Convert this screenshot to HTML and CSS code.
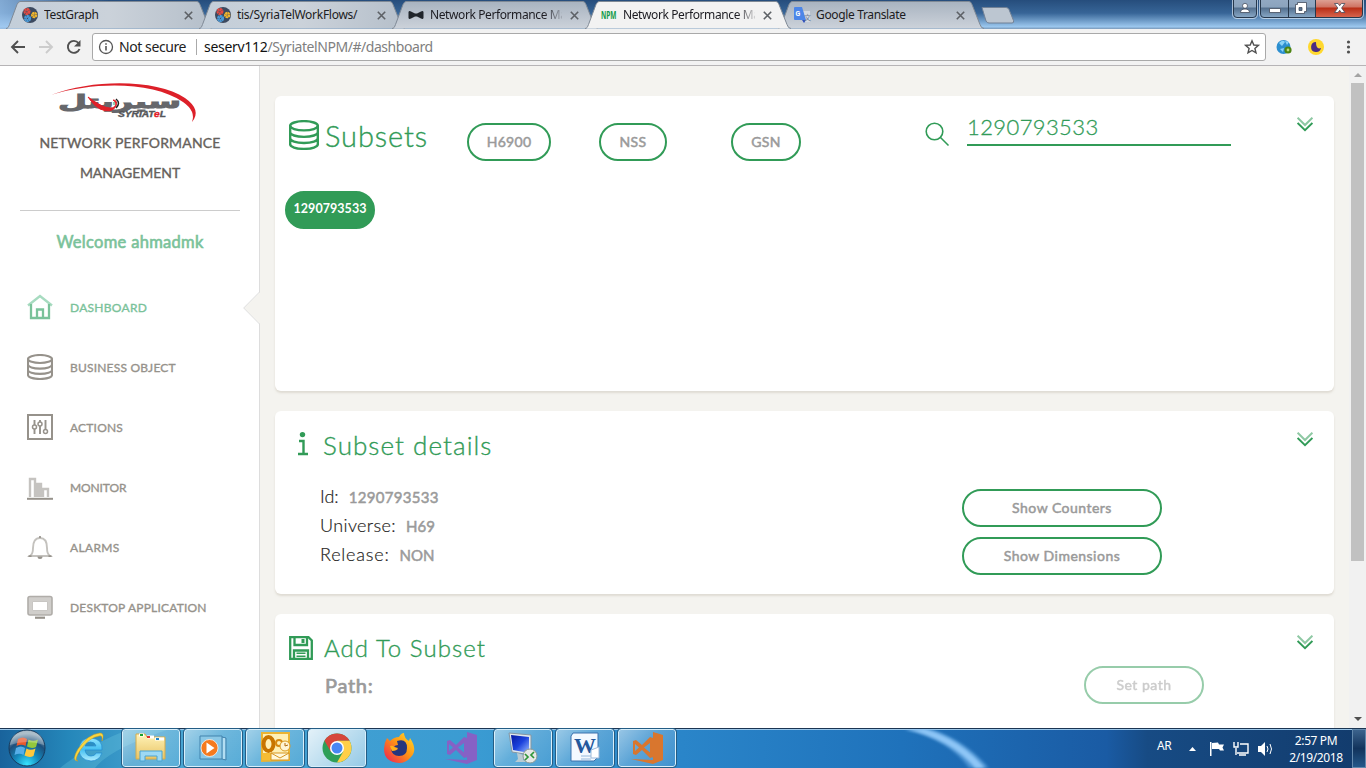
FILE: index.html
```html
<!DOCTYPE html>
<html lang="en">
<head>
<meta charset="utf-8">
<title>Network Performance Management</title>
<link rel="stylesheet" href="styles.css">
</head>
<body>
<svg class="defs" width="0" height="0">
  <defs>
    <linearGradient id="tabfill" x2="1" y2="0"><stop stop-color="#c3ced9"/><stop offset=".5" stop-color="#cbd2da"/><stop offset="1" stop-color="#b5bfca"/></linearGradient>
    <linearGradient id="tabfill2" x2="0" y2="1"><stop stop-color="#a8b3c0"/><stop offset="1" stop-color="#ccd2da"/></linearGradient>
    <radialGradient id="orb" cy=".95" r=".85"><stop stop-color="#37e4ff"/><stop offset=".4" stop-color="#1489bd"/><stop offset=".75" stop-color="#1c4f7c"/><stop offset="1" stop-color="#91a9b9"/></radialGradient>
    <linearGradient id="ie" x2="0" y2="1"><stop stop-color="#90e5ff"/><stop offset=".5" stop-color="#45bff1"/><stop offset="1" stop-color="#b0edff"/></linearGradient>
    <linearGradient id="folder" x2="0" y2="1"><stop stop-color="#fff3b8"/><stop offset="1" stop-color="#e9c465"/></linearGradient>
    <linearGradient id="screen" x2="1" y2="1"><stop stop-color="#0618a0"/><stop offset=".5" stop-color="#1b42dd"/><stop offset="1" stop-color="#98bcff"/></linearGradient>
    <linearGradient id="fox" x1="1" y1="0" x2="0" y2="1"><stop stop-color="#ffe12d"/><stop offset=".45" stop-color="#ff9514"/><stop offset="1" stop-color="#ed1859"/></linearGradient>
    <symbol id="gears" viewBox="0 0 16 16"><circle cx="8" cy="8" r="8" fill="#3c4a60"/><circle cx="5" cy="4.500" r="2" fill="none" stroke="#e24b43" stroke-width="3" stroke-dasharray="1.800 .3"/><circle cx="12.200" cy="8" r="1.900" fill="none" stroke="#f3b72c" stroke-width="2.600" stroke-dasharray="1.800 .3"/><circle cx="5.500" cy="11.500" r="2.100" fill="none" stroke="#4a9bd9" stroke-width="3" stroke-dasharray="1.800 .3"/></symbol>
    <symbol id="x" viewBox="0 0 9 9"><path d="M.8.8l7.400 7.400M8.200.8L.8 8.200" stroke="#5d6166" stroke-width="1.600"/></symbol>
    <symbol id="tab" viewBox="0 0 206 29"><path d="M0 28.500c2 0 2.500-1.500 3.500-4L11 4.500Q12.500 1.500 14 1.500H191q2 0 3 3l8 20q1.200 4 4 4" stroke="#7f8995"/></symbol>
    <symbol id="db" viewBox="0 0 26 26"><g fill="none" stroke="currentColor" stroke-width="2.100"><ellipse cx="13" cy="5" rx="12" ry="4"/><path d="M1 5v16c0 2.300 5 4 12 4s12-1.700 12-4V5M1 10.600c0 2.200 5 4 12 4s12-1.800 12-4M1 15.900c0 2.200 5 4 12 4s12-1.800 12-4"/></g></symbol>
    <symbol id="chev" viewBox="0 0 16 15"><g fill="none" stroke="#319b57"><path d="M.6.700L8 8l7.400-7.300" stroke-width="2" opacity=".55"/><path d="M.6 6L8 13.200 15.400 6" stroke-width="1.900"/></g></symbol>
    <symbol id="vs" viewBox="0 0 32 32"><path fill="currentColor" fill-rule="evenodd" d="M22 0l10 3v25l-10 4L0 27l22 1V0zM2 9l3-1 6 5 8-8 3 1v19l-3 1-8-8-6 5-3-1zM4 12v7l4-3.500zM19 11l-6 4.500 6 5z"/></symbol>
  </defs>
</svg>

<header class="chrome">
  <div class="strip">
    <div class="tab"><svg class="shape a"><use href="#tab"/></svg><svg class="fav"><use href="#gears"/></svg><span class="label t1">TestGraph</span><svg class="close"><use href="#x"/></svg></div>
    <div class="tab"><svg class="shape a"><use href="#tab"/></svg><svg class="fav"><use href="#gears"/></svg><span class="label t2">tis/SyriaTelWorkFlows/</span><svg class="close"><use href="#x"/></svg></div>
    <div class="tab"><svg class="shape b"><use href="#tab"/></svg><svg class="fav" viewBox="0 0 16 16"><path fill="#20252b" d="M.5 5Q1 3.500 3 4.500l4 2h2l4-2q2-1 2.500.5v6q-.5 1.500-2.500.5l-4-2H7l-4 2Q1 12.500.500 11z"/></svg><span class="label fade">Network Performance Ma</span><svg class="close"><use href="#x"/></svg></div>
    <div class="tab active"><svg class="shape c"><use href="#tab"/></svg><svg class="fav" viewBox="0 0 16 16"><text x="0" y="11.800" textLength="15.500" lengthAdjust="spacingAndGlyphs" class="npm">NPM</text></svg><span class="label fade">Network Performance Ma</span><svg class="close"><use href="#x"/></svg></div>
    <div class="tab"><svg class="shape b"><use href="#tab"/></svg><svg class="fav" viewBox="0 0 16 16"><path fill="#d4dae2" d="M7 4h9v11H9z"/><path fill="#4c86e8" d="M1 0h7l4 13H1q-1 0-1-1V1q0-1 1-1z"/><path fill="#304ebf" d="M8 13h4l-2 3z"/><text x="1.500" y="8.500" class="gg">G</text><text x="10" y="12.500" class="wen">文</text></svg><span class="label t5">Google Translate</span><svg class="close"><use href="#x"/></svg></div>
    <svg class="newtab" viewBox="0 0 34 17"><path d="M1 .5h24q2 0 3 2l4.500 11q.8 2.500-1.500 2.500H8q-2 0-3-2z" fill="#bcc6d1" stroke="#718196"/></svg>
    <svg class="winbtns" viewBox="0 0 132 20">
      <defs><linearGradient id="wb" x2="0" y2="1"><stop stop-color="#92a9c3"/><stop offset=".44" stop-color="#8ba3bd"/><stop offset=".48" stop-color="#536f8e"/><stop offset="1" stop-color="#89a9c7"/></linearGradient><linearGradient id="wr" x2="0" y2="1"><stop stop-color="#dfa69a"/><stop offset=".44" stop-color="#cf7262"/><stop offset=".48" stop-color="#b82d16"/><stop offset="1" stop-color="#d96750"/></linearGradient></defs>
      <g stroke="#27384c"><path d="M1.500-1V14q0 3.500 3.500 3.500H21q3.500 0 3.500-3.500V-1z" fill="url(#wb)"/><path d="M28.500-1V14q0 3.500 3.500 3.500H127q3.500 0 3.500-3.500V-1z" fill="url(#wb)"/><path d="M83.500-1V17.500H127q3.500 0 3.500-3.500V-1z" fill="url(#wr)"/><path d="M56.500 0V17"/></g>
      <path d="M.5 0V14q0 4.500 4.500 4.500H21q4.500 0 4.500-4.500V0M27.500 0V14q0 4.500 4.500 4.500H127q4.500 0 4.500-4.500V0" fill="none" stroke="#dbe8f6" opacity=".7"/>
      <g fill="#fff" stroke="#424b5c" stroke-width=".8"><circle cx="13" cy="5.800" r="2.500"/><path d="M8.500 12.500q0-3.500 4.500-3.500t4.500 3.500zM37.500 8.500h11v4h-11z"/><path fill-rule="evenodd" d="M65.500 2.500h9v9h-2v2h-9v-9h2zM67 7.500v3h3v-3z"/><path d="M102.500 3.500h3.500l1.700 2.200 1.700-2.200h3.500l-3.300 4.500 3.300 4.500h-3.500l-1.700-2.200-1.700 2.200h-3.500l3.300-4.500z"/></g>
    </svg>
  </div>
  <div class="toolbar">
    <svg class="nav" viewBox="0 0 80 20"><g fill="none" stroke-width="1.900"><path d="M16 10H3.500M9 4l-6 6 6 6" stroke="#505050"/><path d="M30 10h12.500M37 4l6 6-6 6" stroke="#ccc"/><path d="M69.500 6A6 6 0 1 0 70.500 12" stroke="#505050"/></g><path d="M71.500 3v6.500H65z" fill="#505050"/></svg>
    <div class="omni">
      <svg class="info" viewBox="0 0 16 16"><circle cx="8" cy="8" r="6.500" fill="none" stroke="#555" stroke-width="1.300"/><path d="M8 7v4.500M8 4.300v1.500" stroke="#555" stroke-width="1.600"/></svg>
      <span class="secure">Not secure</span><i class="sep"></i><span class="url"><b>seserv112</b>/SyriatelNPM/#/dashboard</span>
      <svg class="star" viewBox="0 0 16 16"><path d="M8 1.800l1.800 4.200 4.600.4-3.500 3 1.100 4.500L8 11.500l-4 2.400 1.100-4.500-3.500-3 4.600-.4z" fill="none" stroke="#505050" stroke-width="1.400"/></svg>
    </div>
    <svg class="ext" viewBox="0 0 80 20"><circle cx="7.500" cy="10" r="7" fill="#2c8fd0"/><path d="M3 6q4-4 6-1L6 9zM9 4l4 1-2 3zM4 12l4-1-1 4z" fill="#8bd3f7"/><circle cx="12" cy="13" r="2.500" fill="#b9dc7b" stroke="#4d8411" stroke-width="2.200"/><circle cx="40" cy="10" r="8" fill="#ffd82e"/><path d="M40 5a5 5 0 1 0 5 6q-5 2-5-6z" fill="#4b2c82"/><g fill="#505050"><circle cx="72.500" cy="5" r="1.600"/><circle cx="72.500" cy="10" r="1.600"/><circle cx="72.500" cy="15" r="1.600"/></g></svg>
  </div>
</header>

<div class="app">
  <aside class="side">
    <svg class="logo" viewBox="0 0 146 40">
      <text x="7" y="25" textLength="123" lengthAdjust="spacingAndGlyphs" class="arabic">سيريتل</text>
      <path d="M0 12C45-5 107-3 134 15q17 12 7 24 4-11-9-20C103-1 45-2 0 12z" fill="#dd2029"/>
      <path d="M37 14q11 8 17 10 10 3 11-3-1-3-3-4 5 0 3 6-4 8-16 3Q43 23 37 14z" fill="#e12028" stroke="#e12028"/>
      <path d="M65 16q5 4 0 9" fill="none" stroke="#222" stroke-width="1.500"/><path d="M63 19v3" stroke="#28a263"/>
      <text x="67" y="34" textLength="48" lengthAdjust="spacingAndGlyphs" class="latin">SYRIAT<tspan class="red">e</tspan>L</text>
    </svg>
    <h1 class="brand"><span>NETWORK PERFORMANCE</span><span class="br2">MANAGEMENT</span></h1>
    <p class="welcome"><span>Welcome ahmadmk</span></p>
    <nav class="menu">
      <a class="item on"><svg viewBox="0 0 26 26"><path d="M1 11.500L13 2l12 9.500" fill="none" stroke="#a7dbc0" stroke-width="2.400"/><path d="M4 10v14h18V10M10 24v-8.500h6V24" fill="none" stroke="#7ac29a" stroke-width="2.300"/></svg><span class="m1">DASHBOARD</span></a>
      <a class="item"><svg><use href="#db"/></svg><span class="m2">BUSINESS OBJECT</span></a>
      <a class="item"><svg viewBox="0 0 26 26"><g fill="none" stroke="currentColor"><path d="M1 1h24v24H1z" stroke-width="2"/><path d="M7.500 6v5M7.500 15v5M13 6v2M13 12v8M18.500 6v9" stroke-width="1.900"/><circle cx="7.500" cy="13" r="2" stroke-width="1.500"/><circle cx="13" cy="10" r="2" stroke-width="1.500"/><circle cx="18.500" cy="17.500" r="2" stroke-width="1.500"/></g></svg><span class="m3">ACTIONS</span></a>
      <a class="item"><svg viewBox="0 0 26 26"><path d="M3 23V5h5v18M9 23V10h5v13M16 23v-8h5v8" fill="none" stroke="#c5c3c0" stroke-width="2.400"/><path d="M9.500 11h5v12h-5z" fill="#c5c3c0"/><path d="M0 24.800h26" stroke="#96928b" stroke-width="2"/></svg><span class="m4">MONITOR</span></a>
      <a class="item"><svg viewBox="0 0 26 26"><path d="M3 22q3-2 3-8 0-10 7-10t7 10q0 6 3 8z" fill="none" stroke="#c4c2be" stroke-width="1.900"/><path d="M1.500 22.200h3M21.500 22.200h3M13 2v2" stroke="#96928b" stroke-width="1.700"/><path d="M10.500 22.500h5q0 2.500-2.500 2.500t-2.500-2.500z" fill="#96928b"/></svg><span class="m5">ALARMS</span></a>
      <a class="item"><svg viewBox="0 0 26 26"><rect x="1" y="2.500" width="24" height="18.500" rx="2" fill="#d0cecb" stroke="#b0ada9" stroke-width="1.600"/><path d="M5.500 7.500h15v9h-15z" fill="#fff" stroke="#c8c6c3"/><path d="M8 23.700h10" stroke="#96928b" stroke-width="2.200"/></svg><span class="m6">DESKTOP APPLICATION</span></a>
    </nav>
    <svg class="notch" viewBox="0 0 17 32"><path d="M17 0L1 16l16 16z" fill="#f4f3ef"/><path d="M16.500 0L.700 16l15.800 16" fill="none" stroke="#ddd"/></svg>
  </aside>

  <main class="main">
    <section class="card c1">
      <div class="row">
        <svg class="dbi"><use href="#db"/></svg><h2 class="h-sub">Subsets</h2>
        <div class="filters"><div><button class="pill p1"><span>H6900</span></button></div><div><button class="pill p2"><span>NSS</span></button></div><div><button class="pill p3"><span>GSN</span></button></div></div>
        <svg class="search" viewBox="0 0 24 24"><circle cx="9.500" cy="9.500" r="8.300" fill="none" stroke="#319b57" stroke-width="1.600"/><path d="M15.500 15.500l8 8" stroke="#319b57" stroke-width="1.600"/></svg>
        <div class="query"><span>1290793533</span></div>
        <svg class="chev"><use href="#chev"/></svg>
      </div>
      <button class="pill solid"><span>1290793533</span></button>
    </section>
    <section class="card c2">
      <div class="row"><svg class="ii" viewBox="0 0 10 24"><circle cx="4.500" cy="2.600" r="2.700" fill="#319b57"/><path d="M1 9h4.500v13M0 22h10" fill="none" stroke="#319b57" stroke-width="2.400"/></svg><h2 class="h-det">Subset details</h2><svg class="chev"><use href="#chev"/></svg></div>
      <div class="details">
        <dl class="facts"><div><dt class="d1">Id:</dt><dd class="v1">1290793533</dd></div><div><dt class="d2">Universe:</dt><dd class="v2">H69</dd></div><div><dt class="d3">Release:</dt><dd class="v3">NON</dd></div></dl>
        <div class="acts"><button class="pill"><span class="b1">Show Counters</span></button><button class="pill"><span class="b2">Show Dimensions</span></button></div>
      </div>
    </section>
    <section class="card c3">
      <div class="row"><svg class="save" viewBox="0 0 24 24"><g fill="none" stroke="#319b57" stroke-width="2.300"><path d="M1.200 1.200H19.500l3.300 3.300v18.300H1.200z"/><path d="M5.500 1.500v7.500h12.500V1.500M5 22.500v-8h14v8"/></g><path d="M12.500 3h3v4h-3zM7.500 16.500h9v1.500h-9zM7.500 19.500h9V21h-9z" fill="#319b57"/></svg><h2 class="h-add">Add To Subset</h2><svg class="chev"><use href="#chev"/></svg></div>
      <div class="pathrow"><span class="path">Path:</span><button class="pill off"><span>Set path</span></button></div>
    </section>
  </main>
  <div class="scroll"><i class="up"></i><i class="thumb"></i><i class="down"></i></div>
</div>

<footer class="task">
  <svg class="swoosh" viewBox="0 0 1366 40" preserveAspectRatio="none"><path d="M60 40Q90 15 130 0h40Q110 20 95 40z" fill="#7bd7e8" opacity=".25"/><path class="soft" d="M906 0Q950 10 975 40h10Q960 10 925 0z" fill="#a7d5ff"/><path class="soft" d="M903 0Q948 10 969 40h20Q964 10 930 0z" fill="#78b9f0" opacity=".5"/></svg>
  <svg class="orb" viewBox="0 0 38 38"><circle cx="19" cy="19" r="18" fill="url(#orb)" stroke="#173a5c"/><g transform="translate(1 -3)"><path d="M9 13q5-3 9 0l-1.500 7q-4-2.500-9 0z" fill="#e9592c"/><path d="M19.500 13.500q5 2.500 9.500 0l-2 7.500q-4 2-9-.5z" fill="#93c83d"/><path d="M7 22q5-3 9 0l-1.500 7q-4-2.500-9 0z" fill="#56aee8"/><path d="M17.500 22.500q4 2.500 9 0l-2 7.500q-4 2-9-.5z" fill="#ffc83c"/></g><path d="M2 16Q3 2 19 2t17 14Q19 10 2 16z" fill="#fff" opacity=".25"/></svg>
  <div class="slot"><svg viewBox="0 0 32 32"><path d="M29 18H12q1 6 6 6 4 0 5-3h6q-3 8-11 8Q6 28 6 17 7 6 18 6q12 1 11 12zM12 14h11q-1-4-5.500-4T12 14z" fill="url(#ie)" stroke="#238bd0" stroke-width=".7"/><path d="M5 29Q-2 29 5 17 15 2 27 1q5 0 2 8 1-6-3-5Q17 5 8 17q-8 12-3 12z" fill="#f8d641" stroke="#d69c15" stroke-width=".5"/></svg></div>
  <div class="slot open"><svg viewBox="0 0 32 32"><path d="M1 5V2h9l2 3h18v22H1z" fill="url(#folder)" stroke="#d6ac4d"/><path d="M4 3h5M12 5h7M20 7h9" stroke="#fff" stroke-width="3"/><path d="M5 3h3" stroke="#18a12c" stroke-width="2"/><path d="M12 5h3" stroke="#d33" stroke-width="2"/><path d="M21 7h3" stroke="#28c" stroke-width="2"/><path d="M5 29V19h22v10h-5v-5H10v5z" fill="#9dd9f4" stroke="#4ba4d2"/></svg></div>
  <div class="slot open"><svg viewBox="0 0 32 32"><path d="M3 4h22v23H3zM25 5l4 1v22l-4-1" fill="#8bc8e6" stroke="#4383ad"/><path d="M27 6v21" stroke="#dcf4ff"/><circle cx="12.500" cy="16" r="8.500" fill="#f57a1e" stroke="#fff" stroke-width=".7"/><path d="M9.500 10.500l8 5.500-8 5.500z" fill="#fff"/></svg></div>
  <div class="slot open"><svg viewBox="0 0 32 32"><path d="M3 1h27v27l-27 1z" fill="#fff0b5" stroke="#eab434" stroke-width="2"/><path d="M3 21h27v7H3z" fill="#f6bd35"/><path d="M12 21h18v7H12z" fill="#fff8dc" stroke="#d69622"/><path d="M12 21l9 5 9-5" fill="none" stroke="#d69622"/><ellipse cx="9.500" cy="12" rx="5" ry="7" fill="none" stroke="#c87500" stroke-width="4"/><circle cx="20" cy="11" r="3" fill="none" stroke="#d68810" stroke-width="2"/><circle cx="26" cy="14" r="5" fill="#fff5d6" stroke="#d99a22"/><path d="M26 11v3l3-1" fill="none" stroke="#b36b10"/></svg></div>
  <div class="slot open cur"><svg viewBox="0 0 32 32"><circle cx="16" cy="16" r="14.500" fill="#2e9f58"/><path d="M16 1.500a14.500 14.500 0 0 1 12.600 7.300H16L9.700 19.600 3.500 8.700A14.500 14.500 0 0 1 16 1.500z" fill="#d6463b"/><path d="M28.600 8.800A14.500 14.500 0 0 1 16 30.500l6.300-11L16 8.800z" fill="#ffcf48"/><circle cx="16" cy="16" r="7" fill="#fff"/><circle cx="16" cy="16" r="5.500" fill="#4787f3"/></svg></div>
  <div class="slot"><svg viewBox="0 0 32 32"><path d="M4 6l3 3q4-4 9-4 2-4 5-4 0 5 5 8l1-3q8 12 1 19-5 6-12 6Q1 30 1 17 1 11 4 6z" fill="url(#fox)"/><path d="M14 9q10-3 10 7 0 8-8 8-7 0-8-7 3 3 7 0l-4-2q1-2 4-2z" fill="#25367e"/><path d="M7 14q3-1 4 1l4 1q-2 3-6 3z" fill="#ffb21b"/></svg></div>
  <div class="slot vsp"><svg><use href="#vs"/></svg></div>
  <div class="slot open"><svg viewBox="0 0 32 32"><path d="M2 1l22 2v20L5 20z" fill="#e0e8ed" stroke="#8496a3"/><path d="M4 3l18 2v16L6 18z" fill="url(#screen)"/><path d="M10 21l7 2-1 5 5 2H8l3-3z" fill="#b9cbd3"/><circle cx="23" cy="24" r="7" fill="#e6e8e6" stroke="#8c9994"/><path d="M18 22l3 3-3 3M27 20l-3 3 3 3" fill="none" stroke="#2f9639" stroke-width="1.700"/></svg></div>
  <div class="slot open"><svg viewBox="0 0 32 32"><path d="M4 1h25v24l-4 4H2V4z" fill="#f4f9ff" stroke="#3c72ae"/><path d="M12 24h12M12 27h10" stroke="#96b9dd"/><text x="5" y="21" class="word">W</text><path d="M22 18l8-3v11h-8z" fill="#fff" stroke="#9cb8d8"/></svg></div>
  <div class="slot open vso"><svg><use href="#vs"/></svg></div>
  <div class="tray"><span class="lang">AR</span>
    <svg class="icons" viewBox="0 0 90 20"><g fill="#fff"><path d="M4 12l3.500-4 3.500 4zM25 3h1.500v14H25zM27 4l6-.5 1 2h5l-1.500 3 1.500 3h-4l-1-1.500h-7z"/><path d="M73 7h3l4-4v14l-4-4h-3z"/></g><g fill="none" stroke="#fff" stroke-width="1.400"><path d="M55 5h8v9H52M51 9v7M54 16h7M49 3v5h4V3"/><path d="M82 7q2 3 0 6M85 5q3 5 0 10" stroke-width="1"/></g></svg>
    <div class="clock"><span class="ck1">2:57 PM</span><span class="ck2">2/19/2018</span></div><i class="peek"></i></div>
</footer>
</body>
</html>
```
FILE: styles.css
```css
* { box-sizing: border-box; }
body { margin: 0; width: 1366px; height: 768px; overflow: hidden; display: flex; flex-direction: column; font-family: Lato, sans-serif; background: #f4f3ef; }
svg { display: block; flex: none; overflow: visible; }
.defs { position: absolute; }
h1, h2, p, dl, dd { margin: 0; font-weight: 400; }
span, h2, dt, dd { white-space: nowrap; }

/* browser window */
.chrome { height: 66px; flex: none; font-family: "Noto Sans", "Open Sans", sans-serif; }
.strip { height: 29px; display: flex; padding-left: 6px; background: linear-gradient(90deg, rgba(160,200,240,.75), rgba(160,200,240,0) 8%), linear-gradient(#264d7c, #376597 45%, #9bc7ee 92%, #7a98b8); position: relative; }
.tab { position: relative; z-index: 0; width: 206px; height: 29px; margin-right: -13px; display: flex; align-items: center; padding: 1px 0 0 16px; flex: none; }
.tab.active { z-index: 2; }
.shape { position: absolute; left: 0; top: 0; width: 206px; height: 29px; z-index: -1; }
.a { fill: url(#tabfill); }
.b { fill: url(#tabfill2); }
.c { fill: #f2f2f2; }
.fav { width: 16px; height: 16px; }
.label { font-size: 12px; line-height: 16px; margin-left: 6px; width: 132px; overflow: hidden; color: #1c1c22; letter-spacing: -.35px; }
.t2 { letter-spacing: -.28px; }
.fade { letter-spacing: -.4px; -webkit-mask-image: linear-gradient(90deg, #000 88%, rgba(0,0,0,.15)); mask-image: linear-gradient(90deg, #000 86%, rgba(0,0,0,.15)); }
.close { width: 9px; height: 9px; margin-left: 8px; }
.npm { font: bold 10px "Open Sans", sans-serif; fill: #109a48; }
.gg { font: bold 7px Roboto, sans-serif; fill: #fff; }
.wen { font: 7px "Noto Sans CJK SC", sans-serif; fill: #718096; }
.newtab { width: 34px; height: 17px; margin: 7px 0 0 10px; }
.winbtns { width: 132px; height: 20px; margin-left: auto; margin-right: 2px; }
.toolbar { height: 37px; background: #f2f2f2; border-bottom: 1px solid #b6b4b6; display: flex; align-items: center; padding-left: 9px; }
.nav { width: 80px; height: 20px; }
.omni { width: 1174px; height: 28px; margin-left: 3px; border: 1px solid #a9a9a9; border-radius: 3px; background: #fff; display: flex; align-items: center; padding-left: 5px; font-size: 14px; }
.info { width: 16px; height: 16px; }
.secure { margin: -1px 0 0 5px; color: #222; width: 67px; letter-spacing: -.42px; }
.sep { width: 1px; height: 16px; background: #aaa; margin: 0 7px 0 10px; }
.url { color: #808080; letter-spacing: -.45px; margin-top: -1px; }
.url b { color: #111; font-weight: 400; letter-spacing: -.3px; }
.star { width: 16px; height: 16px; margin-left: auto; margin-right: 5px; }
.ext { width: 80px; height: 20px; margin-left: 10px; }

/* layout */
.app { height: 662px; display: flex; flex: none; }
.side { width: 260px; background: #fff; border-right: 1px solid #ddd; position: relative; flex: none; }
.logo { width: 146px; height: 40px; margin: 17px 0 0 51px; }
.arabic { font: bold 19px "DejaVu Sans", sans-serif; fill: #66676b; stroke: #66676b; stroke-width: 1px; }
.latin { font: italic bold 9.500px "Liberation Sans", sans-serif; fill: #55565a; stroke: #55565a; stroke-width: .4px; }
.red { fill: #e12028; stroke: #e12028; }
.brand { margin: 5px 19px 0 20px; height: 83px; border-bottom: 1px solid #ccc; font-size: 14px; line-height: 30px; text-align: center; color: #66615b; -webkit-text-stroke: .35px; letter-spacing: .17px; display: flex; flex-direction: column; align-items: center; }
.br2 { letter-spacing: -.05px; }
.welcome { margin: 16px 0 0 1px; height: 30px; line-height: 30px; text-align: center; font-size: 16.5px; color: #7ac29a; -webkit-text-stroke: .6px; letter-spacing: .3px; }
.menu { margin-top: 20px; }
.item { height: 60px; display: flex; align-items: center; padding-left: 27px; color: #96928b; font-size: 12px; letter-spacing: .2px; -webkit-text-stroke: .35px; }
.item svg { width: 26px; height: 26px; }
.item span { margin-left: 17px; }
.m1 { letter-spacing: .28px; }
.m4 { letter-spacing: -.1px; }
.m5 { letter-spacing: .35px; }
.on { color: #7ac29a; }
.notch { position: absolute; right: -1px; top: 226px; width: 17px; height: 32px; }
.main { width: 1090px; padding: 30px 0 0 15px; overflow: hidden; }
.card { width: 1059px; background: #fff; border-radius: 6px; box-shadow: 0 2px 2px rgba(204,197,185,.5); margin-bottom: 20px; }
.row { display: flex; align-items: flex-start; position: relative; color: #319b57; }
.chev { width: 16px; height: 15px; margin: 20.5px 21px 0 auto; }
.c1 { height: 295px; }
.c2 { height: 183px; }
.c3 { height: 190px; }
.c1 .row { height: 95px; }
.dbi { width: 30px; height: 30px; margin: 24px 0 0 14px; }
h2 { color: #319b57; }
.h-sub { width: 142px; margin: 21px 0 0 6px; font-size: 29px; line-height: 38px; font-weight: 300; letter-spacing: .9px; -webkit-text-stroke: .35px; }
.filters { display: grid; grid-template-columns: repeat(3, 132px); margin-top: 27px; }
.pill { height: 38px; padding: 0 0 2px; border: 2px solid #319b57; border-radius: 20px; background: transparent; font: 14px Lato, sans-serif; color: #9a9a9a; -webkit-text-stroke: .5px; display: flex; align-items: center; justify-content: center; }
.p1 { width: 84px; letter-spacing: .3px; }
.p2 { width: 68px; letter-spacing: .4px; }
.p3 { width: 70px; letter-spacing: .3px; }
.search { width: 24px; height: 24px; margin: 26px 0 0 62px; }
.query { width: 264px; height: 50px; margin-left: 18px; border-bottom: 2px solid #319b57; font-size: 22px; line-height: 30px; padding-top: 16px; font-weight: 300; letter-spacing: .4px; -webkit-text-stroke: .3px; }
.solid { width: 90px; margin-left: 10px; background: #319b57; color: #fff; font-size: 12.5px; font-weight: 700; letter-spacing: .05px; -webkit-text-stroke: 0; padding-bottom: 4px; }
.ii { width: 10px; height: 24px; margin: 21px 0 0 23px; }
.h-det { margin: 16px 0 0 15px; font-size: 26px; line-height: 36px; font-weight: 300; letter-spacing: 1.05px; -webkit-text-stroke: .35px; }
.c2 .row { height: 71px; }
.details { display: flex; justify-content: space-between; padding: 0 172px 0 45px; }
.facts div { display: flex; height: 29px; align-items: baseline; line-height: 29px; }
.facts dt { font-size: 18px; color: #252422; font-weight: 300; -webkit-text-stroke: .2px; }
.d2 { letter-spacing: .38px; }
.d3 { letter-spacing: .8px; }
.facts dd { font-size: 15px; color: #9a9a9a; margin-left: 10px; -webkit-text-stroke: .5px; }
.v1 { letter-spacing: .3px; }
.acts { display: flex; flex-direction: column; gap: 10px; padding-top: 7px; }
.acts .pill { width: 200px; letter-spacing: .48px; }
.save { width: 24px; height: 24px; margin: 22px 0 0 14px; }
.h-add { margin: 16px 0 0 11px; font-size: 24px; line-height: 35px; font-weight: 300; letter-spacing: 1.05px; -webkit-text-stroke: .35px; }
.c3 .row { height: 52px; }
.pathrow { display: flex; justify-content: space-between; padding: 0 130px 0 50px; }
.path { font-size: 20px; line-height: 38px; color: #9a9a9a; letter-spacing: .7px; -webkit-text-stroke: .7px; }
.off { width: 120px; opacity: .5; letter-spacing: .5px; }
.scroll { width: 17px; margin-left: auto; background: #f1f1f1; display: flex; flex-direction: column; align-items: center; }
.up, .down { border: 4px solid transparent; border-top: 0; border-bottom: 4px solid #a3a3a3; margin: 7px 0 6px; }
.thumb { width: 13px; height: 478px; background: #c1c1c1; }
.down { border-top: 4px solid #505050; border-bottom: 0; margin: auto 0 7px; }

/* taskbar */
.task { height: 40px; position: relative; z-index: 0; border-top: 1px solid #1b3552; box-shadow: inset 0 1px #9cc7e9; display: flex; background: linear-gradient(90deg, #19639c, #2587ba 5%, #48a5d3 12%, #3a9bd2 35%, #2a85c9 50%, #1f72bb 66%, #1a5ba4 81%, #174b84 84%, #123b6c 100%); }
.swoosh { position: absolute; inset: 0; width: 1366px; height: 39px; z-index: -1; overflow: hidden; }
.soft { filter: blur(1.5px); }
.orb { width: 38px; height: 38px; margin: 0 14px 0 8px; }
.slot { width: 58px; height: 38px; margin: 0 4px 0 0; border: 1px solid transparent; border-radius: 3px; display: flex; align-items: center; justify-content: center; }
.slot svg { width: 32px; height: 32px; }
.open { border-color: #d8effb; outline: 1px solid #245d85; background: linear-gradient(135deg, rgba(255,255,255,.5), rgba(255,255,255,.22) 45%, rgba(255,255,255,.1)); }
.cur { background: linear-gradient(135deg, rgba(255,255,255,.85), rgba(255,255,255,.45)); }
.vsp { color: #8661c5; }
.vso { color: #d9762e; }
.word { font: bold 22px "Liberation Serif", serif; fill: #24589c; }
.tray { margin-left: auto; display: flex; color: #fff; font: 12px "Noto Sans", sans-serif; }
.lang { width: 28px; line-height: 34px; font-size: 12px; letter-spacing: -.5px; }
.icons { width: 90px; height: 20px; margin-top: 10px; }
.clock { width: 72px; margin-left: 5px; display: flex; flex-direction: column; align-items: center; line-height: 17px; padding-top: 3px; letter-spacing: -.4px; }
.peek { width: 14px; height: 39px; border: 1px solid #6389ad; background: linear-gradient(#3c638d, #12335c 50%, #24588a); }
```
